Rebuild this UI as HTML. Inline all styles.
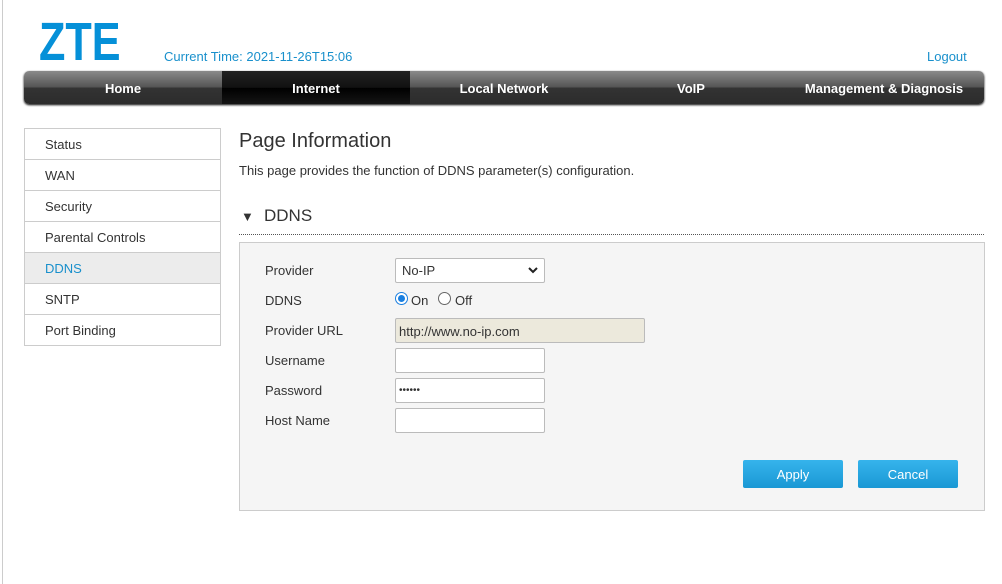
<!DOCTYPE html><html><head><style>
body{margin:0;width:1002px;height:584px;background:#fff;font-family:"Liberation Sans",sans-serif;position:relative;overflow:hidden;font-size:13px;color:#333}
.a{position:absolute}
.nav{left:24px;top:71px;width:960px;height:33px;border-radius:5px;background:linear-gradient(#8a8a8a,#555 48%,#333 52%,#2c2c2c);overflow:hidden;box-shadow:0 1px 2px #000}
.nav div{position:absolute;top:0;height:33px;line-height:35px;color:#fff;font-size:13px;text-align:center;font-weight:bold}
.side{left:24px;top:128px;width:195px;border:1px solid #ccc;border-bottom:none}
.side div{height:30px;line-height:31px;border-bottom:1px solid #ccc;padding-left:20px}
.lbl{left:265px;font-size:13px}
.in{left:395px;width:150px;height:25px;border:1px solid #bbb;border-radius:2px;background:#fff;box-sizing:border-box}
.btn{top:460px;width:100px;height:28px;background:linear-gradient(#36b4ec,#1a98d4);color:#fff;text-align:center;line-height:29px;font-size:13px;border-radius:2px}
</style></head><body>
<div class="a" style="left:2px;top:0;width:1px;height:584px;background:#ccc"></div>
<div class="a" style="left:39px;top:12px;font-size:54px;font-weight:bold;color:#0590d8;transform:scaleX(0.8);transform-origin:left;line-height:60px">ZTE</div>
<div class="a" style="left:164px;top:49px;color:#1990cc">Current Time: 2021-11-26T15:06</div>
<div class="a" style="left:927px;top:49px;color:#1990cc">Logout</div>
<div class="a nav">
<div style="left:0;width:198px">Home</div>
<div style="left:198px;width:188px;background:linear-gradient(#222,#111 50%,#000 52%,#151515)">Internet</div>
<div style="left:386px;width:188px">Local Network</div>
<div style="left:574px;width:186px">VoIP</div>
<div style="left:760px;width:200px">Management &amp; Diagnosis</div>
</div>
<div class="a side">
<div>Status</div><div>WAN</div><div>Security</div><div>Parental Controls</div>
<div style="background:#ececec;color:#1990cc">DDNS</div><div>SNTP</div><div>Port Binding</div>
</div>
<div class="a" style="left:239px;top:130px;font-size:20px;color:#333">Page Information</div>
<div class="a" style="left:239px;top:163px">This page provides the function of DDNS parameter(s) configuration.</div>
<div class="a" style="left:241px;top:209px;font-size:13px">▼</div>
<div class="a" style="left:264px;top:206px;font-size:17px">DDNS</div>
<div class="a" style="left:239px;top:234px;width:745px;border-top:1px dotted #555"></div>
<div class="a" style="left:239px;top:242px;width:744px;height:267px;background:#f5f5f5;border:1px solid #ccc"></div>
<div class="a lbl" style="top:263px">Provider</div>
<div class="a lbl" style="top:293px">DDNS</div>
<div class="a lbl" style="top:323px">Provider URL</div>
<div class="a lbl" style="top:353px">Username</div>
<div class="a lbl" style="top:383px">Password</div>
<div class="a lbl" style="top:413px">Host Name</div>
<div class="a in" style="top:258px;padding:4px 6px">No-IP<svg style="position:absolute;right:6px;top:8px" width="10" height="7" viewBox="0 0 10 7"><path d="M1 1l4 4 4-4" fill="none" stroke="#222" stroke-width="2"/></svg></div>
<div class="a" style="left:395px;top:292px;width:13px;height:13px;border-radius:50%;border:1px solid #1a7fe0;box-sizing:border-box;background:#fff"><div style="margin:2px;width:7px;height:7px;border-radius:50%;background:#1a7fe0"></div></div>
<div class="a" style="left:411px;top:293px">On</div>
<div class="a" style="left:438px;top:292px;width:13px;height:13px;border-radius:50%;border:1px solid #666;box-sizing:border-box;background:#fff"></div>
<div class="a" style="left:455px;top:293px">Off</div>
<div class="a in" style="top:318px;width:250px;background:#ece9dc;padding:5px 3px">http://www.no-ip.com</div>
<div class="a in" style="top:348px"></div>
<div class="a in" style="top:378px;padding:6px 3px;font-size:10px;line-height:12px">••••••</div>
<div class="a in" style="top:408px"></div>
<div class="a btn" style="left:743px">Apply</div>
<div class="a btn" style="left:858px">Cancel</div>
</body></html>
